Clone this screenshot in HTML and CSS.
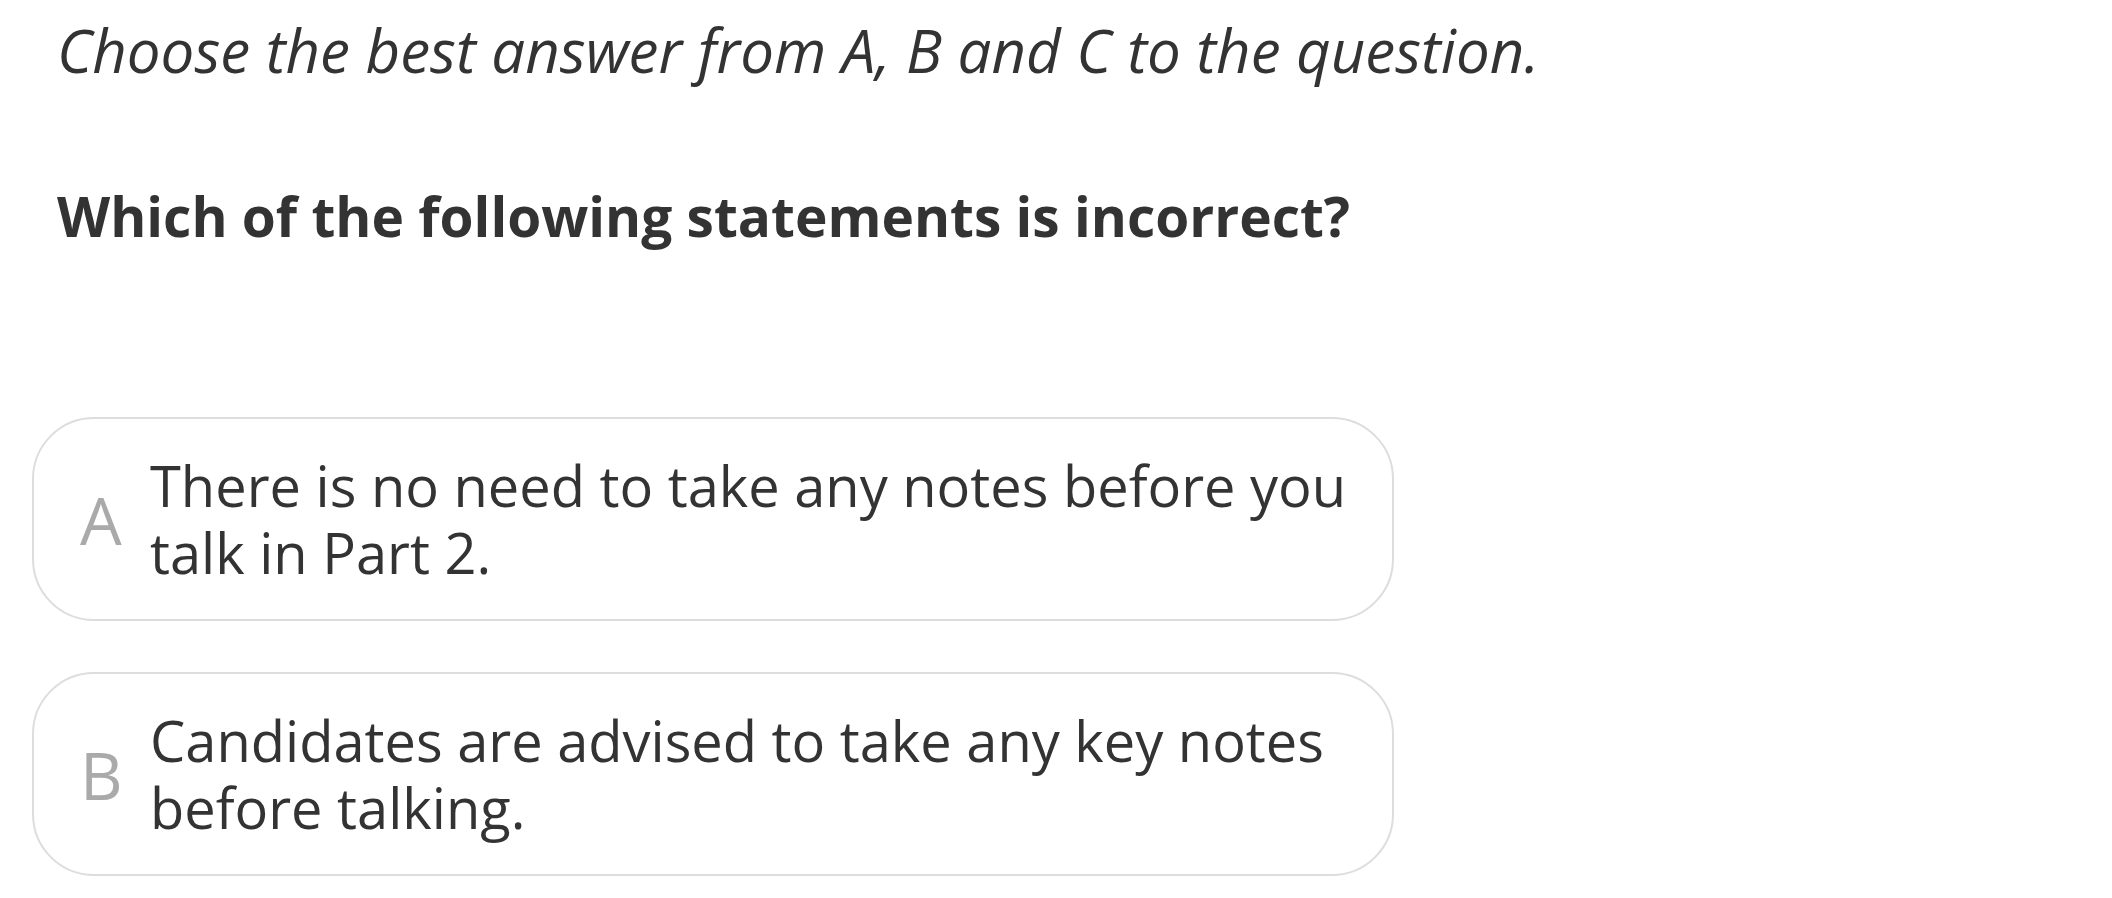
FILE: index.html
```html
<!DOCTYPE html>
<html lang="en">
<head>
<meta charset="utf-8">
<title>Question</title>
<link rel="stylesheet" href="styles.css">
</head>
<body>
<main class="page">
  <p class="instruction">Choose the best answer from A, B and C to the question.</p>
  <h1 class="question">Which of the following statements is incorrect?</h1>
  <div class="options">
    <div class="option">
      <span class="letter">A</span>
      <span class="text">There is no need to take any notes before you talk in Part 2.</span>
    </div>
    <div class="option">
      <span class="letter">B</span>
      <span class="text">Candidates are advised to take any key notes before talking.</span>
    </div>
  </div>
</main>
</body>
</html>
```

FILE: styles.css
```css
html, body {
  margin: 0;
  padding: 0;
  background: #ffffff;
}

body {
  font-family: "Open Sans", "Noto Sans", sans-serif;
  color: #333333;
}

.page {
  padding: 10px 0 0 32px;
}

.instruction {
  margin: 0 0 0 25px;
  font-size: 60px;
  font-style: italic;
  font-weight: 400;
  line-height: 80px;
  white-space: nowrap;
}

.question {
  margin: 86px 0 0 25px;
  font-size: 55px;
  font-weight: 700;
  line-height: 80px;
  white-space: nowrap;
}

.options {
  margin-top: 161px;
  display: flex;
  flex-direction: column;
  gap: 51px;
}

.option {
  box-sizing: border-box;
  width: 1362px;
  height: 204px;
  border: 2px solid #dddddd;
  border-radius: 62px;
  display: flex;
  align-items: center;
  padding: 0 40px 0 46px;
}

.letter {
  width: 70px;
  flex: none;
  font-size: 66px;
  line-height: 1;
  color: #aaaaaa;
}

.text {
  font-size: 56px;
  line-height: 67px;
  color: #333333;
}
```
